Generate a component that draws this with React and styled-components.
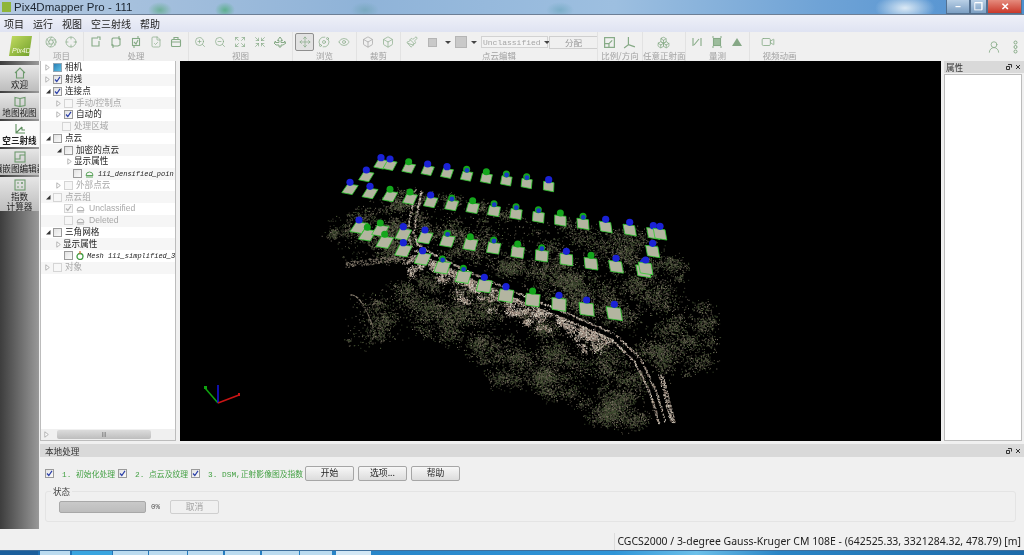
import styled, { createGlobalStyle } from "styled-components";
import {
  Aperture,
  Box,
  Boxes,
  Crosshair,
  Expand,
  Eye,
  FileCheck,
  Move,
  Orbit,
  Paintbrush,
  Shrink,
  UserRound,
  Video,
  ZoomIn,
  ZoomOut,
} from "lucide-react";

const CJK = `"Noto Sans CJK SC", sans-serif`;
const SANS = `"Liberation Sans", "Noto Sans CJK SC", sans-serif`;
const MONO = `"Liberation Mono", "Noto Sans CJK SC", monospace`;
const ICON = "#86aa86";

const GlobalStyle = createGlobalStyle`
  html, body { margin: 0; padding: 0; background: #f0f0f0; }
  body { font-family: ${SANS}; }
`;

const Page = styled.div`
  width: 1024px;
  height: 555px;
  display: flex;
  flex-direction: column;
  overflow: hidden;
  background: #f0f0f0;
  filter: blur(0.35px);
`;

const TitleBar = styled.div`
  height: 14px;
  flex: none;
  display: flex;
  align-items: center;
  padding-left: 2px;
  border-bottom: 1px solid #6d7f96;
  background:
    radial-gradient(ellipse 12px 8px at 160px 10px, #6fb09a, transparent),
    radial-gradient(ellipse 10px 8px at 225px 10px, #5fb08f, transparent),
    radial-gradient(ellipse 14px 8px at 365px 10px, #7aa9c0, transparent),
    radial-gradient(ellipse 14px 8px at 560px 10px, #7caec8, transparent),
    radial-gradient(ellipse 30px 14px at 905px 8px, #dbe9f5, transparent),
    linear-gradient(90deg, #b3c8e0 0%, #8fb3d8 35%, #9dbfe0 60%, #6fa3d6 80%, #4d8fd0 100%);
`;

const AppMark = styled.span`
  width: 9px;
  height: 10px;
  background: #8fb53a;
  margin-right: 3px;
`;

const TitleText = styled.span`
  font-size: 11.5px;
  color: #1c2530;
  flex: 1;
`;

const WinControls = styled.div`
  display: flex;
  height: 14px;
  margin-right: 2px;
`;

const WinButton = styled.div`
  width: ${(p) => p.$w}px;
  display: flex;
  align-items: center;
  justify-content: center;
  border: 1px solid #53708f;
  border-top: none;
  color: #fff;
  font-size: 10px;
  font-weight: 700;
  background: ${(p) =>
    p.$close
      ? "linear-gradient(#e58b7d, #c9382a)"
      : "linear-gradient(#b9d0e6, #7c9fc3)"};
`;

const MenuBar = styled.div`
  height: 17px;
  flex: none;
  display: flex;
  align-items: center;
  gap: 9px;
  padding-left: 4px;
  background: linear-gradient(#eef0f8, #dfe3f2);
`;

const MenuItem = styled.span`
  font-family: ${CJK};
  font-size: 10px;
  line-height: 14px;
  color: #222;
`;

const Toolbar = styled.div`
  height: 29px;
  flex: none;
  display: flex;
  background: #f0f0f0;
`;

const LogoCell = styled.div`
  width: 39px;
  flex: none;
  display: flex;
  align-items: center;
  justify-content: center;
  padding-bottom: 2px;
  box-sizing: border-box;
`;

const ToolGroup = styled.div`
  width: ${(p) => p.$w}px;
  flex: none;
  display: flex;
  flex-direction: column;
  padding-top: 2px;
  border-left: 1px solid #e2e2e2;
  box-sizing: border-box;
`;

const ToolRow = styled.div`
  height: 16px;
  display: flex;
  align-items: center;
  padding-left: ${(p) => p.$pad}px;
`;

const ToolLabel = styled.div`
  font-family: ${CJK};
  font-size: 8.5px;
  line-height: 11px;
  color: #a2a2a2;
  text-align: center;
  white-space: nowrap;
`;

const Tool = styled.div`
  width: ${(p) => p.$w || 20}px;
  height: 16px;
  flex: none;
  display: flex;
  align-items: center;
  justify-content: center;
  color: ${(p) => p.$color || ICON};
  box-sizing: border-box;
  ${(p) =>
    p.$active &&
    "background:#e2e2e2;border:1px solid #8f8f8f;border-radius:2px;width:19px;height:18px;"}
`;

const Caret = styled.span`
  width: 0;
  height: 0;
  margin: 0 3px;
  border-left: 3px solid transparent;
  border-right: 3px solid transparent;
  border-top: 3px solid #444;
`;

const GraySwatch = styled.span`
  display: block;
  width: ${(p) => p.$size}px;
  height: ${(p) => p.$size}px;
  background: #c9c9c9;
  border: 1px solid #b5b5b5;
  box-sizing: border-box;
`;

const Combo = styled.div`
  width: 67px;
  height: 12px;
  flex: none;
  margin-left: 1px;
  display: flex;
  align-items: center;
  justify-content: space-between;
  padding: 0 4px 0 1px;
  box-sizing: border-box;
  border: 1px solid #d2d2d2;
  background: #f3f3f3;
  font-family: ${MONO};
  font-size: 8px;
  color: #a5a5a5;
`;

const AssignButton = styled.div`
  width: 49px;
  height: 13px;
  flex: none;
  margin-left: 1px;
  border: 1px solid #cfcfcf;
  box-sizing: border-box;
  text-align: center;
  font-family: ${CJK};
  font-size: 8.5px;
  line-height: 11px;
  color: #9a9a9a;
`;

const ToolEnd = styled.div`
  flex: 1;
  display: flex;
  justify-content: flex-end;
  align-items: center;
  gap: 11px;
  padding: 0 6px 0 0;
  height: 30px;
`;

const Workspace = styled.div`
  height: 468px;
  flex: none;
  display: flex;
`;

const Rail = styled.div`
  width: 39px;
  flex: none;
  margin-right: 1px;
  display: flex;
  flex-direction: column;
  background: linear-gradient(90deg, #3d3d3d, #999);
  padding-top: 4px;
  box-sizing: border-box;
`;

const RailItem = styled.div`
  height: ${(p) => p.$h}px;
  flex: none;
  margin-bottom: 2px;
  display: flex;
  flex-direction: column;
  align-items: center;
  overflow: hidden;
  padding-top: 2px;
  box-sizing: border-box;
  background: ${(p) =>
    p.$active ? "#fafafa" : "linear-gradient(#e6e6e6, #bdbdbd)"};
  color: ${(p) => (p.$active ? "#5f8f5f" : "#6d9a6d")};
`;

const RailText = styled.span`
  font-family: ${CJK};
  font-size: 8.6px;
  line-height: 10px;
  color: #222;
  white-space: nowrap;
  text-align: center;
  font-weight: ${(p) => (p.$active ? 700 : 400)};
`;

const Content = styled.div`
  flex: 1;
  min-width: 0;
  display: flex;
  flex-direction: column;
`;

const Upper = styled.div`
  height: 380px;
  flex: none;
  display: flex;
`;

const TreePanel = styled.div`
  width: 136px;
  flex: none;
  display: flex;
  flex-direction: column;
  box-sizing: border-box;
  border: 1px solid #bcbcbc;
  border-top: none;
  background: #fff;
  margin-right: 4px;
`;

const TreeRows = styled.div`
  flex: 1;
  overflow: hidden;
  padding-top: 1px;
`;

const TreeRow = styled.div`
  height: 11.75px;
  display: flex;
  align-items: center;
  padding-left: ${(p) => p.$pad}px;
  background: ${(p) => (p.$odd ? "#f6f6f6" : "#fff")};
  white-space: nowrap;
`;

const Arrow = styled.span`
  width: 9px;
  height: 9px;
  flex: none;
  display: flex;
  align-items: center;
  justify-content: center;
`;

const CheckBox = styled.span`
  width: 9px;
  height: 9px;
  flex: none;
  margin: ${(p) => p.$margin || "0 3px 0 1px"};
  display: flex;
  align-items: center;
  justify-content: center;
  box-sizing: border-box;
  border: 1px solid ${(p) => (p.$faded ? "#d5d5d5" : "#9a9a9a")};
  background: ${(p) =>
    p.$faded ? "#f7f7f7" : "linear-gradient(135deg, #e2e2e2, #fafafa)"};
`;

const CameraSwatch = styled.span`
  width: 9px;
  height: 9px;
  flex: none;
  margin: 0 3px 0 1px;
  border: 1px solid #8fa5b5;
  box-sizing: border-box;
  background: linear-gradient(135deg, #2a7fb5, #5cc0e6);
`;

const TreeText = styled.span`
  font-family: ${SANS};
  font-size: 8.6px;
  line-height: 11px;
  color: ${(p) => (p.$faded ? "#a8a8a8" : "#222")};
`;

const FileText = styled.span`
  font-family: ${MONO};
  font-style: italic;
  font-size: 7px;
  color: #222;
`;

const ScrollBar = styled.div`
  height: 11px;
  flex: none;
  display: flex;
  align-items: center;
  background: #f0f0f0;
  padding: 0 3px;
  gap: 4px;
`;

const ScrollThumb = styled.div`
  width: 94px;
  height: 9px;
  margin-left: 4px;
  border-radius: 2px;
  background: linear-gradient(#dcdcdc, #bdbdbd);
  text-align: center;
  font-size: 6px;
  line-height: 9px;
  color: #666;
`;

const Viewport = styled.div`
  width: 761px;
  flex: none;
  background: #000;
  margin-right: 3px;
`;

const CloudSvg = styled.svg`
  display: block;
  width: 761px;
  height: 380px;
`;

const PropsPanel = styled.div`
  flex: 1;
  display: flex;
  flex-direction: column;
`;

const DockHeader = styled.div`
  height: ${(p) => p.$h}px;
  flex: none;
  display: flex;
  align-items: center;
  justify-content: space-between;
  padding: 0 3px 0 ${(p) => p.$pad}px;
  background: #d9d9d9;
  font-family: ${CJK};
  font-size: 8.6px;
  color: #333;
`;

const DockIcons = styled.span`
  display: flex;
  gap: 3px;
  align-items: center;
`;

const PropsBody = styled.div`
  flex: 1;
  margin: 1px 2px 0 0;
  background: #fff;
  border: 1px solid #bcbcbc;
`;

const LocalPanel = styled.div`
  margin-top: 3px;
  flex: 1;
  display: flex;
  flex-direction: column;
`;

const StepRow = styled.div`
  height: 15px;
  margin-top: 9px;
  display: flex;
  align-items: center;
  padding-left: 5px;
`;

const StepText = styled.span`
  width: ${(p) => p.$w}px;
  flex: none;
  font-family: ${MONO};
  font-size: 7.8px;
  color: #43a043;
  white-space: pre;
`;

const PushButton = styled.div`
  width: ${(p) => p.$w || 49}px;
  height: ${(p) => p.$h || 15}px;
  flex: none;
  margin-right: 4px;
  box-sizing: border-box;
  border: 1px solid ${(p) => (p.$off ? "#cfcfcf" : "#a6a6a6")};
  border-radius: 2px;
  background: ${(p) =>
    p.$off ? "#f0f0f0" : "linear-gradient(#f7f7f7, #dcdcdc)"};
  text-align: center;
  font-family: ${CJK};
  font-size: 8.8px;
  line-height: 12px;
  color: ${(p) => (p.$off ? "#a3a3a3" : "#222")};
`;

const StatusGroup = styled.div`
  position: relative;
  height: 31px;
  margin: 10px 8px 0 5px;
  border: 1px solid #e4e4e4;
  border-radius: 3px;
  display: flex;
  align-items: center;
  padding-left: 13px;
  box-sizing: border-box;
`;

const StatusLegend = styled.span`
  position: absolute;
  left: 5px;
  top: -6px;
  padding: 0 2px;
  background: #f0f0f0;
  font-family: ${CJK};
  font-size: 8.6px;
  line-height: 11px;
  color: #444;
`;

const Progress = styled.div`
  width: 87px;
  height: 12px;
  flex: none;
  border-radius: 2px;
  border: 1px solid #a8a8a8;
  box-sizing: border-box;
  background: linear-gradient(#c9c9c9, #bdbdbd);
`;

const Percent = styled.span`
  width: 24px;
  flex: none;
  padding-left: 5px;
  box-sizing: border-box;
  font-family: ${MONO};
  font-size: 7.5px;
  color: #555;
`;

const StatusBar = styled.div`
  height: 21px;
  flex: none;
  display: flex;
  justify-content: flex-end;
  align-items: flex-end;
`;

const Coordinates = styled.div`
  height: 17px;
  padding: 0 3px 0 2px;
  border-left: 1px solid #dcdcdc;
  font-family: "Noto Sans", sans-serif;
  font-size: 10.45px;
  line-height: 17px;
  color: #222;
  white-space: nowrap;
`;

const Taskbar = styled.div`
  height: 5px;
  flex: none;
  display: flex;
  gap: 1px;
  border-top: 1px solid #3f6f9c;
  box-sizing: border-box;
  background: linear-gradient(90deg, #1f6fb2 0%, #2f95d8 60%, #6cc0ea 68%, #2a85c6 76%, #1d6ba9 100%);
`;

const TaskButton = styled.div`
  width: ${(p) => p.$w}px;
  flex: none;
  margin-left: ${(p) => p.$gap || 0}px;
  background: ${(p) => p.$color};
`;

// seeded noise so the picture stays the same on every load
let seed = 20240611;
const rnd = () => {
  seed = (seed + 0x6d2b79f5) | 0;
  let t = Math.imul(seed ^ (seed >>> 15), 1 | seed);
  t = (t + Math.imul(t ^ (t >>> 7), 61 | t)) ^ t;
  return ((t ^ (t >>> 14)) >>> 0) / 4294967296;
};

const gauss = () => (rnd() + rnd() + rnd() - 1.5) / 0.75;

const inPoly = (x, y, poly) => {
  let inside = false;
  for (let i = 0, j = poly.length - 1; i < poly.length; j = i++) {
    const [xi, yi] = poly[i];
    const [xj, yj] = poly[j];
    if (yi > y !== yj > y && x < ((xj - xi) * (y - yi)) / (yj - yi) + xi) {
      inside = !inside;
    }
  }
  return inside;
};

const ROAD = [
  [418, 190], [410, 233], [415, 247], [433, 258], [467, 275], [513, 295],
  [567, 317], [613, 337], [637, 360], [653, 393], [662, 423],
];

const UPPER_LAND = [
  [322, 222], [345, 212], [400, 186], [430, 188], [520, 215], [600, 232],
  [660, 240], [680, 262], [690, 300], [722, 315], [720, 350], [700, 370],
  [670, 385], [640, 345], [560, 305], [470, 265], [420, 250], [370, 262], [345, 262],
];

const LOWER_LAND = [
  [345, 300], [390, 285], [430, 270], [520, 310], [610, 345], [640, 375],
  [655, 425], [590, 425], [560, 400], [500, 385], [440, 345], [400, 340],
  [375, 355], [345, 345],
];

const DIM = ["#4c483a", "#645e50", "#3c4a2e", "#7c7566", "#35402a", "#4a4538", "#5a6a42"];
const BRIGHT = ["#cfc5b5", "#a99c8c", "#e6ded2", "#9a8478", "#7f7668", "#b8aea0"];

const buildCloud = () => {
  const sets = {};
  const put = (x, y, color) => {
    sets[color] = (sets[color] || "") + `M${x.toFixed(1)} ${y.toFixed(1)}h1`;
  };
  const pick = (list) => list[Math.floor(rnd() * list.length)];
  // thin spread over the land, then clumps for the bushes
  const scatter = (poly, tries, clumps) => {
    for (let i = 0; i < tries; i++) {
      const x = 320 + rnd() * 405;
      const y = 185 + rnd() * 245;
      if (inPoly(x, y, poly)) put(x, y, pick(DIM));
    }
    for (let c = 0; c < clumps; c++) {
      const cx = 320 + rnd() * 405;
      const cy = 185 + rnd() * 245;
      if (!inPoly(cx, cy, poly)) continue;
      const r = 3 + rnd() * 9;
      const n = r * r * 1.3;
      for (let i = 0; i < n; i++) {
        put(cx + gauss() * r, cy + gauss() * r * 0.7, pick(DIM));
      }
    }
  };
  scatter(UPPER_LAND, 5000, 420);
  scatter(LOWER_LAND, 3500, 380);

  for (let s = 0; s < ROAD.length - 1; s++) {
    const [ax, ay] = ROAD[s];
    const [bx, by] = ROAD[s + 1];
    const len = Math.hypot(bx - ax, by - ay);
    const nx = -(by - ay) / len;
    const ny = (bx - ax) / len;
    for (let i = 0; i < len * 4; i++) {
      const t = rnd();
      const side = rnd() < 0.5 ? -1 : 1;
      const off = side * (2.2 + rnd() * 2);
      put(ax + (bx - ax) * t + nx * off, ay + (by - ay) * t + ny * off, pick(BRIGHT));
    }
    // the pale verge below the road, in patches
    if (s >= 2 && s <= 6) {
      for (let c = 0; c < len / 2; c++) {
        const t = rnd();
        const off = 5 + rnd() * rnd() * 24;
        const cx = ax + (bx - ax) * t - Math.abs(nx) * off;
        const cy = ay + (by - ay) * t + Math.abs(ny) * off;
        for (let i = 0; i < 28; i++) {
          put(cx + gauss() * 4, cy + gauss() * 2.5, pick(BRIGHT));
        }
      }
    }
  }
  // spur on the left and the bright end of the road
  for (let i = 0; i < 200; i++) {
    const t = rnd();
    put(345 + t * 65, 262 - t * 8 + rnd() * 6, BRIGHT[4]);
  }
  for (let i = 0; i < 220; i++) {
    const t = rnd();
    put(658 + t * 12 + rnd() * 5, 375 + t * 48, pick(BRIGHT));
  }
  for (let i = 0; i < 60; i++) {
    const t = rnd();
    put(350 + t * 25 + rnd(), 295 + t * t * 42, BRIGHT[4]);
  }
  return sets;
};

const CLOUD = buildCloud();

const Z = (zx, zy, type) => ({ x: 340 + zx / 3, y: 150 + zy / 3, type });
const CAMERAS = [
  Z(123, 23, "b"), Z(150, 27, "b"), Z(206, 35, "g"), Z(263, 42, "b"), Z(321, 50, "b"),
  Z(380, 58, "m"), Z(439, 65, "g"), Z(499, 72, "m"), Z(560, 80, "m"), Z(626, 89, "b"),
  Z(79, 60, "b"), Z(30, 97, "b"), Z(90, 109, "b"), Z(150, 118, "g"), Z(210, 126, "g"),
  Z(272, 135, "b"), Z(335, 144, "m"), Z(398, 152, "g"), Z(462, 161, "m"), Z(528, 170, "m"),
  Z(595, 179, "m"), Z(661, 189, "g"), Z(729, 199, "m"), Z(797, 208, "b"), Z(869, 217, "b"),
  Z(940, 227, "b"), Z(960, 229, "b"),
  Z(57, 210, "b"), Z(82, 232, "g"), Z(121, 219, "g"), Z(134, 253, "g"), Z(190, 230, "b"),
  Z(190, 278, "b"), Z(255, 240, "b"), Z(322, 250, "m"), Z(391, 260, "g"), Z(461, 270, "m"),
  Z(533, 282, "g"), Z(605, 293, "m"), Z(679, 304, "b"), Z(753, 316, "g"), Z(828, 325, "b"),
  Z(938, 280, "b"), Z(910, 338, "b"), Z(917, 330, "b"),
  Z(248, 302, "b"), Z(307, 327, "m"), Z(370, 355, "m"), Z(433, 382, "b"), Z(498, 410, "b"),
  Z(578, 423, "g"), Z(657, 436, "b"), Z(740, 450, "b"), Z(823, 463, "b"),
];

const Camera = ({ x, y, type }) => {
  const scale = 0.9 + ((y - 150) / 150) * 0.45;
  const k = Math.max(-0.8, Math.min(3, ((560 - x) / 210) * 3)) * scale;
  const w = 5.2 * scale;
  const h = 4.8 * scale;
  const cx = x;
  const cy = y + 6.5 * scale;
  const pts = [
    [cx - w + k, cy - h],
    [cx + w + k, cy - h + 1.5],
    [cx + w - k, cy + h + 1],
    [cx - w - k, cy + h - 1],
  ]
    .map((p) => p.map((v) => v.toFixed(1)).join(","))
    .join(" ");
  return (
    <g>
      <polygon points={pts} fill="#b3b5a0" stroke="#2ecb2e" strokeWidth="0.8" />
      {type !== "b" && <circle cx={x} cy={y} r="3.5" fill="#14a61c" />}
      {type === "b" && <circle cx={x} cy={y} r="3.6" fill="#1a22d6" />}
      {type === "m" && <circle cx={x + 0.3} cy={y + 1} r="2.4" fill="#1a3cc4" />}
    </g>
  );
};

const PointCloud = () => (
  <CloudSvg viewBox="180 61 761 380">
    {Object.entries(CLOUD).map(([color, d]) => (
      <path key={color} d={d} stroke={color} strokeWidth="1" fill="none" />
    ))}
    {CAMERAS.map((c, i) => (
      <Camera key={i} {...c} />
    ))}
    <path d="M218 403L205 388" stroke="#0fa30f" strokeWidth="1.5" />
    <rect x="204" y="386" width="3" height="3" fill="#0fa30f" />
    <path d="M218 403V385" stroke="#1414d8" strokeWidth="1.6" />
    <path d="M218 403L239 395" stroke="#c81414" strokeWidth="1.5" />
    <rect x="238" y="393" width="2" height="3" fill="#c81414" />
  </CloudSvg>
);

const Lucide = ({ as: Icon, size = 12 }) => <Icon size={size} strokeWidth={1.4} />;

const Draw = ({ children, size = 12, fill = "none" }) => (
  <svg width={size} height={size} viewBox="0 0 12 12" fill={fill} stroke="currentColor" strokeWidth="1.1">
    {children}
  </svg>
);

const SquareCorner = () => (
  <Draw>
    <path d="M8 2H2v8h7V5" />
    <path d="M7 1h3v3" />
  </Draw>
);
const SquareTurn = () => (
  <Draw>
    <path d="M3 2h6l1 2v5l-2 1H3L2 8V3z" />
    <path d="M9 0v3h2M1 9h2v3" />
  </Draw>
);
const SquareSync = () => (
  <Draw>
    <rect x="2.5" y="2.5" width="7" height="7" />
    <path d="M4 6l2 2 2-4M8 0v3M4 9v3" />
  </Draw>
);
const Case = () => (
  <Draw>
    <rect x="1.5" y="3.5" width="9" height="7" rx="1" />
    <path d="M4 3.5V1.5h4v2M1.5 6h9" />
  </Draw>
);
const PlaneArrows = () => (
  <Draw>
    <path d="M6 1l2.5 3.5H7v2h3.5V5L12 7l-3 2H7v2H5V9H2L0 7l1.5-2v1.5H5v-2H3.5z" strokeWidth="1" />
  </Draw>
);
const MeasureLine = () => (
  <Draw>
    <path d="M2 2v8M10 2v8M3 9l5-6" />
  </Draw>
);
const MeasureArea = () => (
  <Draw fill="#9dbd9d">
    <rect x="2.5" y="2.5" width="7" height="7" />
    <path d="M1 1h2M9 1h2M1 11h2M9 11h2" />
  </Draw>
);
const Triangle = () => (
  <svg width="12" height="12" viewBox="0 0 12 12">
    <path d="M6 2l5 8H1z" fill="#86a886" />
  </svg>
);
const ScaleBox = () => (
  <Draw size={13}>
    <rect x="1.5" y="1.5" width="9" height="9" />
    <path d="M1.5 7h4v3.500M5.500 7l3-3" />
  </Draw>
);
const Axes = () => (
  <Draw size={13}>
    <path d="M5 1v7L1 11M5 8l6 2" />
  </Draw>
);
const DotColumn = () => (
  <svg width="5" height="14" viewBox="0 0 5 14" fill="none" stroke={ICON}>
    <circle cx="2.500" cy="2.500" r="1.500" />
    <circle cx="2.500" cy="7" r="1.500" />
    <circle cx="2.500" cy="11.500" r="1.500" />
  </svg>
);

const Logo = () => (
  <svg width="24" height="22" viewBox="0 0 24 22">
    <defs>
      <linearGradient id="logoFill" x1="0" y1="0" x2="1" y2="1">
        <stop offset="0" stopColor="#c4dc62" />
        <stop offset="1" stopColor="#6f9f2a" />
      </linearGradient>
    </defs>
    <path d="M4 1h20l-3 20H1z" fill="url(#logoFill)" />
    <text x="4" y="18" fontSize="7" fontStyle="italic" fill="#f4f8e0" fontFamily="Liberation Sans">
      Pix4D
    </text>
  </svg>
);

const GROUPS = [
  { label: "项目", w: 44, pad: 1, tools: [<Lucide as={Aperture} />, <Lucide as={Crosshair} />] },
  { label: "处理", w: 105, pad: 2, tools: [<SquareCorner />, <SquareTurn />, <SquareSync />, <Lucide as={FileCheck} />, <Case />] },
  { label: "视图", w: 104, pad: 1, tools: [<Lucide as={ZoomIn} />, <Lucide as={ZoomOut} />, <Lucide as={Expand} />, <Lucide as={Shrink} />, <PlaneArrows />] },
];

const GROUPS_AFTER = [
  { label: "比例/方向", w: 45, pad: 1, tools: [<ScaleBox />, <Axes />] },
  { label: "任意正射面", w: 43, pad: 10, tools: [<Lucide as={Boxes} size={13} />] },
  { label: "量测", w: 64, pad: 1, tools: [<MeasureLine />, <MeasureArea />, <Triangle />] },
];

const TreeCheck = ({ faded }) => (
  <svg width="7" height="7" viewBox="0 0 7 7" fill="none" stroke={faded ? "#b5b5b5" : "#2b3fa8"} strokeWidth="1.2">
    <path d="M1 3.500l1.800 2L6 .800" />
  </svg>
);

const OpenArrow = () => (
  <svg width="6" height="6" viewBox="0 0 6 6">
    <path d="M5.500 1v4.500H1z" fill="#333" />
  </svg>
);

const ClosedArrow = () => (
  <svg width="5" height="7" viewBox="0 0 5 7">
    <path d="M.800.800L4.300 3.500.800 6.200z" fill="#fff" stroke="#a5a5a5" strokeWidth="0.8" />
  </svg>
);

const CloudDot = ({ color }) => (
  <svg width="9" height="8" viewBox="0 0 9 8" fill="none" stroke={color} strokeWidth="1" style={{ marginRight: 4, flex: "none" }}>
    <path d="M1 5.500a3.500 3.500 0 0 1 7 0zM1 7h7" />
  </svg>
);

const MeshDot = () => (
  <svg width="8" height="9" viewBox="0 0 8 9" style={{ marginRight: 3, flex: "none" }}>
    <circle cx="4" cy="5.500" r="3" fill="none" stroke="#3f9a3f" strokeWidth="1.300" />
    <path d="M4 0v3" stroke="#c86b2c" strokeWidth="1.200" />
  </svg>
);

const TREE = [
  { pad: 2, arrow: "closed", swatch: true, text: "相机" },
  { pad: 2, arrow: "closed", check: "on", text: "射线" },
  { pad: 2, arrow: "open", check: "on", text: "连接点" },
  { pad: 13, arrow: "closed", check: "faded", text: "手动/控制点", faded: true },
  { pad: 13, arrow: "closed", check: "on", text: "自动的" },
  { pad: 11, check: "faded", text: "处理区域", faded: true },
  { pad: 2, arrow: "open", check: "off", text: "点云" },
  { pad: 13, arrow: "open", check: "off", text: "加密的点云" },
  { pad: 24, arrow: "closed", text: "显示属性", bare: true },
  { pad: 22, check: "off", cloud: "#5fa55f", file: "111_densified_poin" },
  { pad: 13, arrow: "closed", check: "faded", text: "外部点云", faded: true },
  { pad: 2, arrow: "open", check: "solid", text: "点云组", faded: true },
  { pad: 13, check: "fadedOn", cloud: "#b5b5b5", text: "Unclassified", faded: true },
  { pad: 13, check: "faded", cloud: "#b5b5b5", text: "Deleted", faded: true },
  { pad: 2, arrow: "open", check: "off", text: "三角网格" },
  { pad: 13, arrow: "closed", text: "显示属性", bare: true },
  { pad: 13, check: "off", mesh: true, file: "Mesh 111_simplified_3" },
  { pad: 2, arrow: "closed", check: "faded", text: "对象", faded: true },
];

const Row = ({ item, odd }) => {
  const faded = item.check === "faded" || item.check === "fadedOn" || item.check === "solid";
  return (
    <TreeRow $pad={item.pad} $odd={odd}>
      {item.arrow ? (
        <Arrow>{item.arrow === "open" ? <OpenArrow /> : <ClosedArrow />}</Arrow>
      ) : (
        <Arrow />
      )}
      {item.swatch && <CameraSwatch />}
      {item.check && (
        <CheckBox $faded={faded}>
          {item.check === "on" && <TreeCheck />}
          {item.check === "fadedOn" && <TreeCheck faded />}
        </CheckBox>
      )}
      {item.cloud && <CloudDot color={item.cloud} />}
      {item.mesh && <MeshDot />}
      {item.text && <TreeText $faded={item.faded}>{item.text}</TreeText>}
      {item.file && <FileText>{item.file}</FileText>}
    </TreeRow>
  );
};

const DockButtons = () => (
  <DockIcons>
    <svg width="6" height="6" viewBox="0 0 6 6" fill="none" stroke="#333">
      <path d="M2 .500h3.500v3M.500 2.500h3v3h-3z" />
    </svg>
    <svg width="6" height="6" viewBox="0 0 6 6" fill="none" stroke="#333">
      <path d="M1 1l4 4M5 1L1 5" />
    </svg>
  </DockIcons>
);

const Home = () => (
  <Draw>
    <path d="M1 6l5-5 5 5M2.500 5v6h7V5" />
  </Draw>
);
const MapIcon = () => (
  <Draw>
    <path d="M1 2.500l5 1 5-1v8l-5 1-5-1zM6 3.500v8" />
  </Draw>
);
const AxesSmall = () => (
  <Draw>
    <path d="M2 1v9h9M2 10l6-6M8 4v3h3" />
  </Draw>
);
const MosaicIcon = () => (
  <Draw>
    <rect x="1" y="1" width="10" height="10" />
    <path d="M1 8h5V4h5" />
  </Draw>
);
const IndexIcon = () => (
  <Draw>
    <rect x="1" y="1" width="10" height="10" />
    <path d="M3 4h2M7 4h2M3 8h2M7 8h2M8 3v2" />
  </Draw>
);

const RAIL = [
  { h: 26, icon: <Home />, lines: ["欢迎"] },
  { h: 26, icon: <MapIcon />, lines: ["地图视图"] },
  { h: 26, icon: <AxesSmall />, lines: ["空三射线"], active: true },
  { h: 26, icon: <MosaicIcon />, lines: ["镶嵌图编辑器"] },
  { h: 34, icon: <IndexIcon />, lines: ["指数", "计算器"] },
];

const TASKS = [
  [38, "#1b5f9c", 0], [30, "#bcdcf0", 1], [40, "#3aa5e0", 1], [35, "#bcdcf0", 0], [38, "#bcdcf0", 0],
  [35, "#bcdcf0", 0], [35, "#bcdcf0", 1], [37, "#bcdcf0", 1], [32, "#bcdcf0", 0], [35, "#d4e8f5", 3],
];

export default function App() {
  return (
    <Page>
      <GlobalStyle />
      <TitleBar>
        <AppMark />
        <TitleText>Pix4Dmapper Pro - 111</TitleText>
        <WinControls>
          <WinButton $w={22}>–</WinButton>
          <WinButton $w={15}>❐</WinButton>
          <WinButton $w={33} $close>✕</WinButton>
        </WinControls>
      </TitleBar>
      <MenuBar>
        {["项目", "运行", "视图", "空三射线", "帮助"].map((m) => (
          <MenuItem key={m}>{m}</MenuItem>
        ))}
      </MenuBar>
      <Toolbar>
        <LogoCell>
          <Logo />
        </LogoCell>
        {GROUPS.map((g) => (
          <ToolGroup key={g.label} $w={g.w}>
            <ToolRow $pad={g.pad}>
              {g.tools.map((t, i) => (
                <Tool key={i}>{t}</Tool>
              ))}
            </ToolRow>
            <ToolLabel>{g.label}</ToolLabel>
          </ToolGroup>
        ))}
        <ToolGroup $w={64}>
          <ToolRow $pad={2}>
            <Tool $active>
              <Lucide as={Move} />
            </Tool>
            <Tool>
              <Lucide as={Orbit} />
            </Tool>
            <Tool>
              <Lucide as={Eye} />
            </Tool>
          </ToolRow>
          <ToolLabel>浏览</ToolLabel>
        </ToolGroup>
        <ToolGroup $w={44}>
          <ToolRow $pad={1}>
            <Tool $color="#a0a0a0">
              <Lucide as={Box} />
            </Tool>
            <Tool>
              <Lucide as={Box} />
            </Tool>
          </ToolRow>
          <ToolLabel>裁剪</ToolLabel>
        </ToolGroup>
        <ToolGroup $w={197}>
          <ToolRow $pad={1}>
            <Tool>
              <Lucide as={Paintbrush} />
            </Tool>
            <Tool $color="#999">
              <GraySwatch $size={9} />
            </Tool>
            <Caret />
            <Tool $w={14}>
              <GraySwatch $size={12} />
            </Tool>
            <Caret />
            <Combo>
              Unclassified
              <Caret />
            </Combo>
            <AssignButton>分配</AssignButton>
          </ToolRow>
          <ToolLabel>点云编辑</ToolLabel>
        </ToolGroup>
        {GROUPS_AFTER.map((g) => (
          <ToolGroup key={g.label} $w={g.w}>
            <ToolRow $pad={g.pad}>
              {g.tools.map((t, i) => (
                <Tool key={i}>{t}</Tool>
              ))}
            </ToolRow>
            <ToolLabel>{g.label}</ToolLabel>
          </ToolGroup>
        ))}
        <ToolGroup $w={60}>
          <ToolRow $pad={8}>
            <Tool>
              <Lucide as={Video} size={14} />
            </Tool>
          </ToolRow>
          <ToolLabel>视频动画</ToolLabel>
        </ToolGroup>
        <ToolEnd>
          <Tool $w={16}>
            <Lucide as={UserRound} size={14} />
          </Tool>
          <DotColumn />
        </ToolEnd>
      </Toolbar>
      <Workspace>
        <Rail>
          {RAIL.map((r) => (
            <RailItem key={r.lines[0]} $h={r.h} $active={r.active}>
              {r.icon}
              {r.lines.map((l) => (
                <RailText key={l} $active={r.active}>
                  {l}
                </RailText>
              ))}
            </RailItem>
          ))}
        </Rail>
        <Content>
          <Upper>
            <TreePanel>
              <TreeRows>
                {TREE.map((item, i) => (
                  <Row key={i} item={item} odd={i % 2 === 1} />
                ))}
              </TreeRows>
              <ScrollBar>
                <ClosedArrow />
                <ScrollThumb>|||</ScrollThumb>
              </ScrollBar>
            </TreePanel>
            <Viewport>
              <PointCloud />
            </Viewport>
            <PropsPanel>
              <DockHeader $h={12} $pad={2}>
                属性
                <DockButtons />
              </DockHeader>
              <PropsBody />
            </PropsPanel>
          </Upper>
          <LocalPanel>
            <DockHeader $h={13} $pad={5}>
              本地处理
              <DockButtons />
            </DockHeader>
            <StepRow>
              <CheckBox $margin="0 8px 0 0">
                <TreeCheck />
              </CheckBox>
              <StepText $w={56}>1. 初始化处理</StepText>
              <CheckBox $margin="0 8px 0 0">
                <TreeCheck />
              </CheckBox>
              <StepText $w={56}>2. 点云及纹理</StepText>
              <CheckBox $margin="0 8px 0 0">
                <TreeCheck />
              </CheckBox>
              <StepText $w={97}>3. DSM,正射影像图及指数</StepText>
              <PushButton>开始</PushButton>
              <PushButton>选项...</PushButton>
              <PushButton>帮助</PushButton>
            </StepRow>
            <StatusGroup>
              <StatusLegend>状态</StatusLegend>
              <Progress />
              <Percent>0%</Percent>
              <PushButton $off $h={14}>取消</PushButton>
            </StatusGroup>
          </LocalPanel>
        </Content>
      </Workspace>
      <StatusBar>
        <Coordinates>CGCS2000 / 3-degree Gauss-Kruger CM 108E - (642525.33, 3321284.32, 478.79) [m]</Coordinates>
      </StatusBar>
      <Taskbar>
        {TASKS.map(([w, color, gap], i) => (
          <TaskButton key={i} $w={w} $color={color} $gap={gap} />
        ))}
      </Taskbar>
    </Page>
  );
}
